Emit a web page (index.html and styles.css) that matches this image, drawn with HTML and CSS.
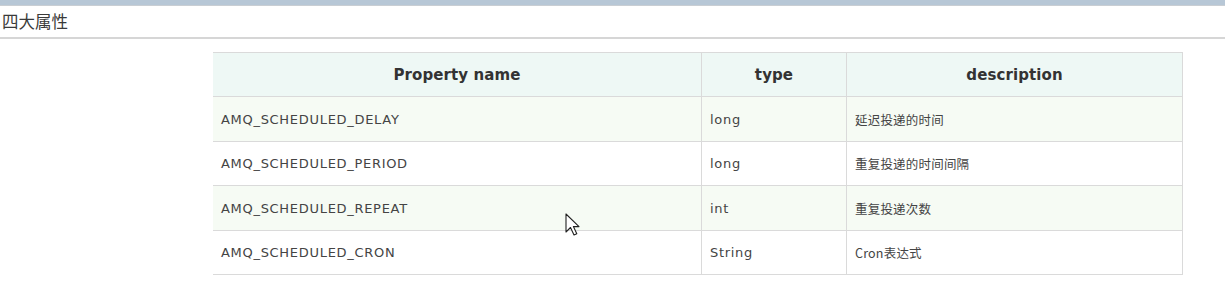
FILE: index.html
```html
<!DOCTYPE html>
<html>
<head>
<meta charset="utf-8">
<link rel="stylesheet" href="styles.css">
</head>
<body>
<div class="topbar"></div>
<div class="title">四大属性</div>
<div class="content">
  <table class="props">
    <thead>
      <tr><th class="c1">Property name</th><th class="c2">type</th><th class="c3">description</th></tr>
    </thead>
    <tbody>
      <tr class="odd"><td>AMQ_SCHEDULED_DELAY</td><td>long</td><td class="cjk">延迟投递的时间</td></tr>
      <tr><td>AMQ_SCHEDULED_PERIOD</td><td>long</td><td class="cjk">重复投递的时间间隔</td></tr>
      <tr class="odd"><td>AMQ_SCHEDULED_REPEAT</td><td>int</td><td class="cjk">重复投递次数</td></tr>
      <tr><td>AMQ_SCHEDULED_CRON</td><td>String</td><td class="cjk">Cron表达式</td></tr>
    </tbody>
  </table>
  <svg class="cursor" width="16" height="24" viewBox="0 0 16 24"><path d="M1 1 L1 19 L5.5 14.5 L9 22 L11.8 20.8 L8.4 13.6 L14 13.6 Z" fill="#fff" stroke="#222" stroke-width="1.1" stroke-linejoin="round"/></svg>
</div>
</body>
</html>
```

FILE: styles.css
```css
html, body { margin: 0; padding: 0; background: #fff; }
body { font-family: "DejaVu Sans", Verdana, "Noto Sans CJK SC", sans-serif; color: #333; }
.topbar { height: 5px; background: #b7c7d6; border-bottom: 1px solid #c9ced3; }
.title {
  height: 33px;
  box-sizing: border-box;
  padding: 3px 0 0 2px;
  font-family: "Noto Sans CJK SC", serif;
  font-size: 16.5px;
  color: #3a3a3a;
  border-bottom: 2px solid #d6d6d6;
}
.content { position: relative; padding: 13px 0 0 213px; }
.props { border-collapse: collapse; width: 970px; table-layout: fixed; }
.props th, .props td { border: 1px solid #dadada; }
.props tr > :first-child { border-left: none; }
.props th {
  height: 43px;
  background: #eef8f5;
  font-weight: bold;
  font-size: 15px;
  letter-spacing: 0.1px;
  color: #333;
  text-align: center;
  padding: 0;
}
.c1 { width: 488px; }
.c2 { width: 144px; }
.props td {
  height: 43px;
  padding: 0 0 0 8px;
  font-size: 13px;
  letter-spacing: 0.7px;
  color: #444;
}
.props tr.odd td { height: 44px; background: #f6fbf4; }
.props td.cjk { font-family: "Noto Sans CJK SC", sans-serif; font-size: 12.5px; letter-spacing: 0.2px; }
.cursor { position: absolute; left: 565px; top: 174px; }
```
